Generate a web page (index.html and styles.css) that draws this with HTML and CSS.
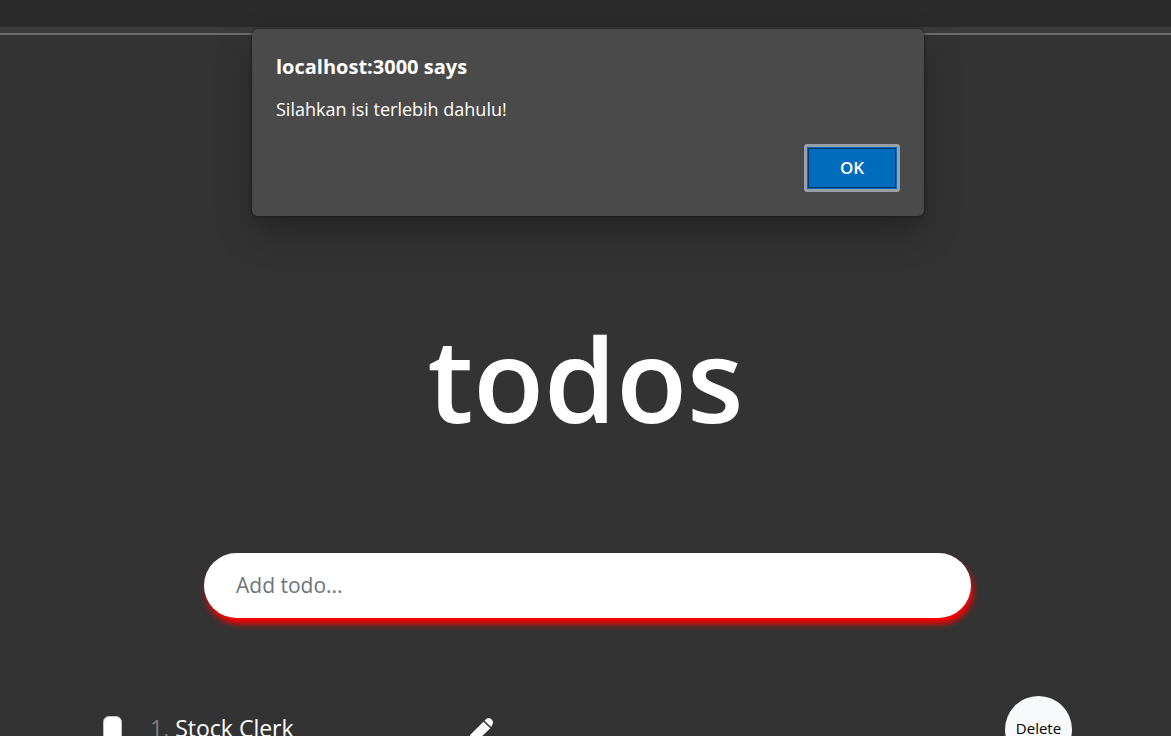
FILE: index.html
```html
<!DOCTYPE html>
<html lang="id">
<head>
<meta charset="utf-8">
<meta name="viewport" content="width=device-width, initial-scale=1">
<title>todos</title>
<link rel="stylesheet" href="styles.css">
</head>
<body>
<header class="toolbar"></header>
<main class="page">
  <h1 class="title">todos</h1>
  <form class="add-form">
    <input class="add-input" type="text" placeholder="Add todo..." aria-label="Add todo">
  </form>
  <ul class="todo-list">
    <li class="todo">
      <input class="todo-check" type="checkbox" id="todo-1">
      <label class="todo-label" for="todo-1"><span class="todo-number">1.</span> Stock Clerk</label>
      <button class="edit-button" type="button" aria-label="Edit">
        <svg class="edit-icon" viewBox="0 0 24 24" aria-hidden="true"><path d="M14.400 3.800L21.300 10.200L8.600 22.400L0 24L1 17ZM15.500 2.800L17.300 1Q19.800 -1 22.300 1.200L23 2Q25 4.400 23.200 6.800L22.200 9Z"/></svg>
      </button>
      <button class="delete-button" type="button">Delete</button>
    </li>
  </ul>
</main>
<div class="dialog" role="alertdialog" aria-labelledby="dialog-title" aria-describedby="dialog-text">
  <h2 class="dialog-title" id="dialog-title">localhost:3000 says</h2>
  <p class="dialog-text" id="dialog-text">Silahkan isi terlebih dahulu!</p>
  <button class="ok-button" type="button">OK</button>
</div>
</body>
</html>
```
FILE: styles.css
```css
* {
  box-sizing: border-box;
}

body {
  margin: 0;
  height: 100vh;
  overflow: hidden;
  background: #333333;
  color: #ffffff;
  font-family: "Segoe UI", "Open Sans", "Noto Sans", sans-serif;
}

.toolbar {
  height: 35px;
  background: #2b2b2b;
  border-bottom: 2px solid #6b6b6b;
  box-shadow: inset 0 -6px #3b3b3b;
}

.page {
  padding: 244px 99px 0;
}

.title {
  margin: 0;
  font-size: 116px;
  font-weight: 600;
  line-height: 198px;
  text-align: center;
}

.add-form {
  margin: 76px 101px 0 105px;
}

.add-input {
  display: block;
  width: 100%;
  height: 65px;
  padding: 0 32px 1px;
  border: 0;
  border-radius: 33px;
  background: #ffffff;
  box-shadow: 2px 6px 6px #ff0000;
  color: #212529;
  font: 400 21px/32px "Segoe UI", "Open Sans", "Noto Sans", sans-serif;
}

.add-input::placeholder {
  color: #6c757d;
  opacity: 1;
}

.todo-list {
  margin: 78px 0 0;
  padding: 0;
  list-style: none;
}

.todo {
  display: grid;
  grid-template-columns: 51px 319px 1fr auto;
  align-items: center;
}

.todo-check {
  appearance: none;
  width: 19px;
  height: 28px;
  margin: 0 0 0 4px;
  border: 1px solid #bfbfbf;
  border-radius: 6px;
  background: #ffffff;
}

.todo-label {
  padding-bottom: 4px;
  font-size: 23px;
  line-height: 32px;
}

.todo-number {
  color: #7f7f7f;
}

.edit-button {
  justify-self: start;
  display: flex;
  padding: 0;
  border: 0;
  background: none;
}

.edit-icon {
  width: 24px;
  height: 24px;
  fill: #ffffff;
  overflow: visible;
}

.delete-button {
  width: 67px;
  height: 67px;
  padding: 0 0 3px;
  border: 0;
  border-radius: 50%;
  background: #f8f9fa;
  color: #000000;
  font: 400 15px/20px "Segoe UI", "Open Sans", "Noto Sans", sans-serif;
}

.dialog {
  position: absolute;
  top: 29px;
  left: 252px;
  right: 247px;
  display: flex;
  flex-direction: column;
  padding: 24px;
  border-radius: 6px;
  background: #4a4a4a;
  box-shadow: 0 0 3px rgba(0, 0, 0, 0.5), 0 16px 36px rgba(0, 0, 0, 0.3);
}

.dialog-title {
  margin: 0;
  font-size: 20px;
  font-weight: 700;
  line-height: 28px;
}

.dialog-text {
  margin: 16px 0 22px;
  font-size: 18px;
  line-height: 25px;
}

.ok-button {
  align-self: flex-end;
  width: 96px;
  height: 48px;
  padding: 0;
  border: 3px solid #989fa6;
  border-radius: 3px;
  background: #006cbe;
  box-shadow: inset 0 0 0 1px #006cbe, inset 0 0 0 2px #003966;
  color: #ffffff;
  font: 600 17px/24px "Segoe UI", "Open Sans", "Noto Sans", sans-serif;
}
```
